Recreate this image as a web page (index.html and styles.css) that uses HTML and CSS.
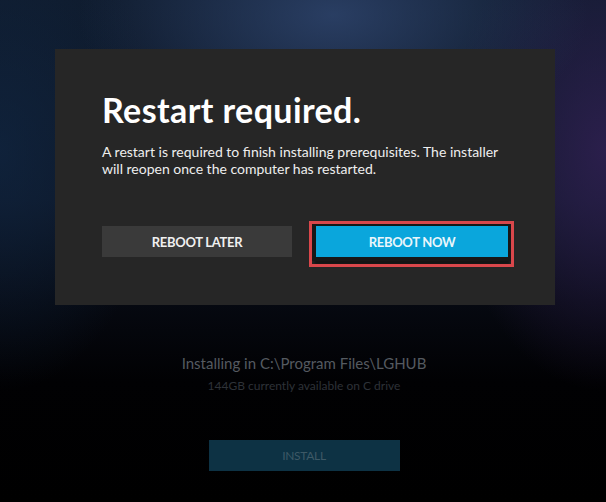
FILE: index.html
```html
<!DOCTYPE html>
<html lang="en">
<head>
<meta charset="utf-8">
<title>Restart required</title>
<link rel="stylesheet" href="styles.css">
</head>
<body>
<main class="screen">
  <section class="dialog">
    <h1 class="dialog-title">Restart required.</h1>
    <p class="dialog-text">A restart is required to finish installing prerequisites. The installer will reopen once the computer has restarted.</p>
    <div class="dialog-actions">
      <button class="btn btn-secondary" type="button">REBOOT LATER</button>
      <button class="btn btn-primary" type="button">REBOOT NOW</button>
    </div>
  </section>
  <section class="install">
    <p class="install-path">Installing in C:\Program Files\LGHUB</p>
    <p class="install-space">144GB currently available on C drive</p>
    <button class="btn btn-install" type="button">INSTALL</button>
  </section>
</main>
</body>
</html>
```
FILE: styles.css
```css
* { box-sizing: border-box; }
html, body {
  margin: 0;
  padding: 0;
  width: 606px;
  height: 502px;
  overflow: hidden;
  background: #000;
}
.screen {
  width: 606px;
  height: 502px;
  display: flex;
  flex-direction: column;
  align-items: flex-start;
  font-family: Lato, "Open Sans", sans-serif;
  background:
    radial-gradient(ellipse 42% 28% at 55% 3%, rgba(46, 68, 108, 0.85), rgba(46, 68, 108, 0) 100%),
    radial-gradient(ellipse 26% 48% at 100% 30%, rgba(48, 32, 82, 0.85), rgba(48, 32, 82, 0) 100%),
    radial-gradient(ellipse 26% 48% at 0% 30%, rgba(16, 38, 66, 0.7), rgba(16, 38, 66, 0) 100%),
    linear-gradient(to bottom, #0f1b2d 0%, #0d1626 40%, #060911 60%, #010103 76%, #000 100%);
}
.dialog {
  margin: 49px 0 0 55px;
  width: 500px;
  height: 256px;
  background: #262626;
  padding: 42px 38px 0 47px;
}
.dialog-title {
  margin: 0;
  font-size: 34px;
  line-height: 38px;
  font-weight: 700;
  color: #ffffff;
  letter-spacing: 0.4px;
}
.dialog-text {
  margin: 14px 0 0;
  font-size: 14px;
  line-height: 17px;
  color: #eeeeee;
}
.dialog-actions {
  margin-top: 49px;
  display: flex;
  gap: 24px;
}
.btn {
  border: 0;
  font-family: Lato, "Open Sans", sans-serif;
  font-weight: 700;
  font-size: 13px;
  letter-spacing: -0.3px;
  height: 31px;
  padding: 0;
  cursor: pointer;
}
.btn-secondary {
  width: 190px;
  background: #3a3a3a;
  color: #f0f0f0;
}
.btn-primary {
  position: relative;
  width: 192px;
  background: #0aa6dc;
  color: #eaf6fb;
  box-shadow: 0 0 0 4px #171717, 0 6px 3px 2px #141414;
}
.btn-primary::after {
  content: "";
  position: absolute;
  left: -7px;
  right: -6px;
  top: -5px;
  bottom: -10px;
  border: 3px solid #d9474b;
}
.install {
  width: 606px;
  display: flex;
  flex-direction: column;
  align-items: center;
  padding-left: 2px;
}
.install-path {
  margin: 50px 0 0;
  font-size: 15px;
  line-height: 17px;
  color: #555a60;
}
.install-space {
  margin: 7px 0 0;
  font-size: 12px;
  line-height: 14px;
  color: #2e3238;
}
.btn-install {
  margin-top: 47px;
  width: 191px;
  background: #0d3244;
  color: #3d5966;
  font-size: 12px;
  font-weight: 400;
}
```
